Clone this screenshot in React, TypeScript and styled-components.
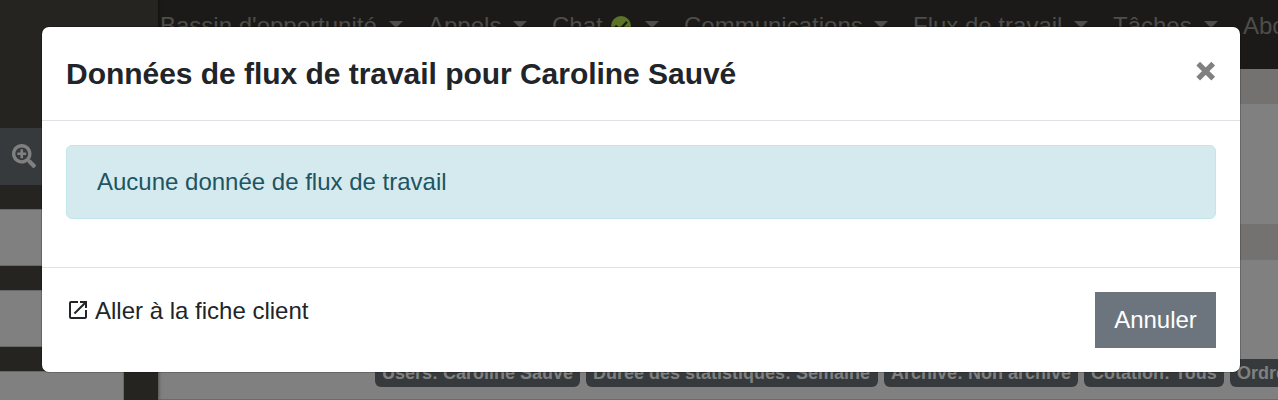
import React from 'react';
import styled, { createGlobalStyle } from 'styled-components';

const Global = createGlobalStyle`
  * { box-sizing: border-box; }
  body { margin: 0; overflow: hidden; font-family: "Liberation Sans", Arial, sans-serif; font-size: 24px; line-height: 36px; color: #212529; }
`;

const Page = styled.div`
  position: relative;
  display: flex;
  width: 1278px;
  height: 400px;
  overflow: hidden;
`;

const Sidebar = styled.aside`
  position: relative;
  z-index: 1;
  flex: none;
  display: flex;
  flex-direction: column;
  width: 158px;
  padding-top: 128px;
  background: #252421;
  box-shadow: 0 0 4px rgba(0, 0, 0, 0.6);
`;

const SearchTab = styled.div`
  flex: none;
  height: 57px;
  margin-bottom: 24px;
  padding: 16px 0 0 12px;
  background: #363a3d;
  color: #808080;
  svg { display: block; }
`;

const Field = styled.div`
  flex: none;
  width: 124px;
  height: 57px;
  margin-bottom: 24px;
  background: #808080;
  border: solid #676969;
  border-width: 1px 1px 1px 0;
`;

const Main = styled.main`
  flex: 1;
  min-width: 0;
  display: flex;
  flex-direction: column;
  background: #808080;
`;

const Nav = styled.nav`
  flex: none;
  display: flex;
  height: 69px;
  padding: 8px 0 0 2px;
  background: #1b1a18;
  color: #4d4d4b;
  white-space: nowrap;
`;

const NavItem = styled.div<{ $width: number }>`
  flex: none;
  display: flex;
  width: ${(p) => p.$width}px;
`;

const Caret = styled.span`
  width: 14px;
  height: 7px;
  margin: 13px 25px 0 auto;
  border: solid transparent;
  border-width: 7px 7px 0;
  border-top-color: #4d4d4b;
`;

const Status = styled.svg`
  margin: 8px 0 0 8px;
`;

const Stripe = styled.div<{ $height: number; $dark?: boolean }>`
  flex: none;
  height: ${(p) => p.$height}px;
  background: ${(p) => (p.$dark ? '#737270' : '#808080')};
`;

const Filters = styled.div`
  flex: none;
  display: flex;
  gap: 6px;
  height: 41px;
  padding-left: 217px;
  border-bottom: 1px solid #6b6b6b;
`;

const Badge = styled.span<{ $width: number }>`
  flex: none;
  width: ${(p) => p.$width}px;
  height: 28px;
  padding-left: 7px;
  border-radius: 6px;
  background: #363a3d;
  color: #808080;
  font-size: 18px;
  font-weight: 700;
  line-height: 28px;
  white-space: nowrap;
`;

const Dialog = styled.section`
  position: absolute;
  z-index: 2;
  top: 27px;
  left: 42px;
  width: 1198px;
  height: 345px;
  display: flex;
  flex-direction: column;
  border-radius: 7px;
  background: #fff;
  box-shadow: 0 0 0 1px rgba(0, 0, 0, 0.2);
`;

const Header = styled.header`
  flex: none;
  display: flex;
  justify-content: space-between;
  height: 94px;
  padding: 24px;
  border-bottom: 1px solid #dee2e6;
`;

const Title = styled.h5`
  margin: 0;
  font-size: 30px;
  line-height: 45px;
  font-weight: 700;
  letter-spacing: -0.035px;
  white-space: nowrap;
`;

const Close = styled.button`
  width: 20px;
  height: 20px;
  margin-top: 10px;
  padding: 0;
  border: 0;
  background: none;
  color: #808080;
  svg { display: block; }
`;

const Body = styled.div`
  flex: 1;
  padding: 24px;
`;

const Alert = styled.div`
  height: 74px;
  padding: 18px 30px;
  border: 1px solid #c3e6eb;
  border-radius: 6px;
  background: #d5eaef;
  color: #205461;
`;

const Footer = styled.footer`
  flex: none;
  display: flex;
  justify-content: space-between;
  height: 105px;
  padding: 24px;
  border-top: 1px solid #dee2e6;
`;

const ClientLink = styled.a`
  display: flex;
  gap: 5px;
  height: 38px;
  line-height: 38px;
  white-space: nowrap;
  svg { margin-top: 6px; }
`;

const Cancel = styled.button`
  width: 121px;
  height: 56px;
  padding: 0;
  border: 0;
  background: #6c757d;
  color: #fff;
  font: inherit;
`;

export default function App() {
  return (
    <>
      <Global />
      <Page>
        <Sidebar>
          <SearchTab>
            <svg width="24" height="24" viewBox="0 0 512 512" fill="currentColor">
              <path d="M304 192v32c0 6.600-5.400 12-12 12h-56v56c0 6.600-5.400 12-12 12h-32c-6.600 0-12-5.400-12-12v-56h-56c-6.600 0-12-5.400-12-12v-32c0-6.600 5.400-12 12-12h56v-56c0-6.600 5.400-12 12-12h32c6.600 0 12 5.400 12 12v56h56c6.600 0 12 5.400 12 12zm201 284.700L476.700 505c-9.400 9.400-24.600 9.400-33.900 0L343 405.300c-4.500-4.500-7-10.600-7-17V372c-35.300 27.600-79.700 44-128 44C93.100 416 0 322.900 0 208S93.100 0 208 0s208 93.100 208 208c0 48.300-16.400 92.700-44 128h16.300c6.400 0 12.500 2.500 17 7l99.700 99.700c9.300 9.400 9.300 24.600 0 34zM344 208c0-75.200-60.800-136-136-136S72 132.800 72 208s60.800 136 136 136 136-60.800 136-136z" />
            </svg>
          </SearchTab>
          <Field />
          <Field />
          <Field />
        </Sidebar>
        <Main>
          <Nav>
            <NavItem $width={268}>Bassin d'opportunité<Caret /></NavItem>
            <NavItem $width={124}>Appels<Caret /></NavItem>
            <NavItem $width={132}>
              Chat
              <Status width="20" height="20" viewBox="0 0 20 20">
                <circle cx="10" cy="10" r="10" fill="#5c7427" />
                <path d="M4.300 9.700l4.200 4.200 7.500-8.200" fill="none" stroke="#1b1a18" strokeWidth="2.400" />
              </Status>
              <Caret />
            </NavItem>
            <NavItem $width={229}>Communications<Caret /></NavItem>
            <NavItem $width={200}>Flux de travail<Caret /></NavItem>
            <NavItem $width={130}>Tâches<Caret /></NavItem>
            <NavItem $width={170}>Abonnements</NavItem>
          </Nav>
          <Stripe $height={35} $dark />
          <Stripe $height={120} />
          <Stripe $height={36} $dark />
          <Stripe $height={99} />
          <Filters>
            <Badge $width={205}>Users: Caroline Sauvé</Badge>
            <Badge $width={292}>Durée des statistiques: Semaine</Badge>
            <Badge $width={194}>Archive: Non archive</Badge>
            <Badge $width={140}>Cotation: Tous</Badge>
            <Badge $width={160}>Ordre: Priorité</Badge>
          </Filters>
        </Main>
        <Dialog role="dialog">
          <Header>
            <Title>Données de flux de travail pour Caroline Sauvé</Title>
            <Close aria-label="Fermer">
              <svg width="20" height="20" viewBox="0 0 20 20" fill="none" stroke="currentColor" strokeWidth="5.200">
                <path d="M2.200 2.600l15 15M17.200 2.600l-15 15" />
              </svg>
            </Close>
          </Header>
          <Body>
            <Alert>Aucune donnée de flux de travail</Alert>
          </Body>
          <Footer>
            <ClientLink>
              <svg width="24" height="24" viewBox="0 0 24 24" fill="currentColor">
                <path d="M19 19H5V5h7V3H5a2 2 0 0 0-2 2v14a2 2 0 0 0 2 2h14c1.100 0 2-.9 2-2v-7h-2v7zM14 3v2h3.590l-9.830 9.830 1.410 1.410L19 6.410V10h2V3h-7z" />
              </svg>
              Aller à la fiche client
            </ClientLink>
            <Cancel>Annuler</Cancel>
          </Footer>
        </Dialog>
      </Page>
    </>
  );
}
